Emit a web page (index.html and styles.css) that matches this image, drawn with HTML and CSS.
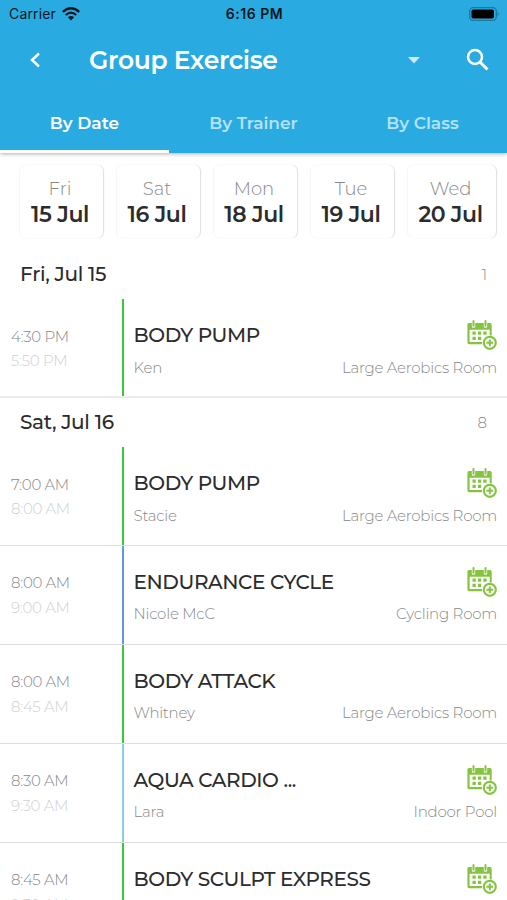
FILE: index.html
```html
<!DOCTYPE html>
<html lang="en">
<head>
<meta charset="utf-8">
<title>Group Exercise</title>
<link rel="stylesheet" href="styles.css">
</head>
<body>
<svg class="defs" width="0" height="0" aria-hidden="true">
  <symbol id="cal" viewBox="0 0 30 30">
    <path d="M2 3h2.800v3.200q0 1.500 1.700 1.500T8.200 6.200V3h8.600v3.200q0 1.500 1.700 1.500T20.200 6.200V3H23q1.700 0 1.700 1.700V15.500h-2V9.800H2.600V22H15V24.200H2Q.4 24.200.4 22.600V4.700Q.4 3 2 3Z" fill="currentColor"/>
    <path d="M6.500 1v4.800M18.500 1v4.800" stroke="currentColor" stroke-width="2" stroke-linecap="round"/>
    <path d="M5.500 11.500h3.300v3.200H5.500zM10.900 11.500h3.300v3.200h-3.300zM16.300 11.500h3.300v3.200h-3.300zM5.500 16.800h3.300V20H5.500zM10.900 16.800h3.300V20h-3.300z" fill="currentColor"/>
    <circle cx="22.800" cy="22.800" r="6" fill="#fff" stroke="currentColor" stroke-width="2.200"/>
    <path d="M22.800 19.400v6.800M19.400 22.800h6.800" stroke="currentColor" stroke-width="2"/>
  </symbol>
</svg>
<header class="header">
  <div class="status">
    <div class="carrier">Carrier
      <svg width="18" height="14" viewBox="0 0 18 14" fill="none" stroke="#07161d" stroke-width="2.300"><path d="M.8 4.900Q9-2.500 17.200 4.900M3.800 8Q9 3.300 14.200 8"/><path d="M9 13.400 5.900 10.300Q9 7.700 12.100 10.300Z" fill="#07161d" stroke="none"/></svg>
    </div>
    <div class="clock">6:16 PM</div>
    <svg class="battery" width="31" height="14" viewBox="0 0 31 14"><rect x=".7" y=".7" width="26.600" height="12.600" rx="3.500" fill="none" stroke="#1c789f" stroke-width="1.300"/><rect x="2.500" y="2.400" width="22.500" height="9.200" rx="1.800"/><path d="M28.500 4.500q2.200 2.500 0 5z" fill="#1c789f"/></svg>
  </div>
  <div class="toolbar">
    <svg class="back" width="12" height="16" viewBox="0 0 12 16"><path d="M10 1.500 3 8 10 14.500" fill="none" stroke="#fff" stroke-width="2.500"/></svg>
    <h1 class="heading">Group Exercise</h1>
    <svg class="caret" width="12" height="7" viewBox="0 0 12 7"><path d="M0 0h12L6 6.500z" fill="#c9edfb"/></svg>
    <svg class="search" width="24" height="24" viewBox="0 0 24 24" fill="none" stroke="#fff"><circle cx="9" cy="9" r="7" stroke-width="2.500"/><path d="m14 14 7.500 7.500" stroke-width="3"/></svg>
  </div>
  <nav class="tabs">
    <div class="tab active"><span>By Date</span></div>
    <div class="tab"><span>By Trainer</span></div>
    <div class="tab"><span>By Class</span></div>
  </nav>
</header>
<div class="dates">
  <div class="date"><span class="dow">Fri</span><span class="day">15 Jul</span></div>
  <div class="date"><span class="dow">Sat</span><span class="day">16 Jul</span></div>
  <div class="date"><span class="dow">Mon</span><span class="day">18 Jul</span></div>
  <div class="date"><span class="dow">Tue</span><span class="day">19 Jul</span></div>
  <div class="date"><span class="dow">Wed</span><span class="day">20 Jul</span></div>
</div>
<main>
  <div class="group"><h2>Fri, Jul 15</h2><span class="count">1</span></div>
  <article class="row last">
    <div class="times"><span>4:30 PM</span><span class="end">5:50 PM</span></div>
    <div class="info green"><div class="top"><h3>BODY PUMP</h3><svg class="cal"><use href="#cal"/></svg></div><div class="sub"><span>Ken</span><span>Large Aerobics Room</span></div></div>
  </article>
  <div class="group next"><h2>Sat, Jul 16</h2><span class="count">8</span></div>
  <article class="row">
    <div class="times"><span>7:00 AM</span><span class="end">8:00 AM</span></div>
    <div class="info green"><div class="top"><h3>BODY PUMP</h3><svg class="cal"><use href="#cal"/></svg></div><div class="sub"><span>Stacie</span><span>Large Aerobics Room</span></div></div>
  </article>
  <article class="row">
    <div class="times"><span>8:00 AM</span><span class="end">9:00 AM</span></div>
    <div class="info blue"><div class="top"><h3>ENDURANCE CYCLE</h3><svg class="cal"><use href="#cal"/></svg></div><div class="sub"><span>Nicole McC</span><span>Cycling Room</span></div></div>
  </article>
  <article class="row">
    <div class="times"><span>8:00 AM</span><span class="end">8:45 AM</span></div>
    <div class="info green"><div class="top"><h3>BODY ATTACK</h3></div><div class="sub"><span>Whitney</span><span>Large Aerobics Room</span></div></div>
  </article>
  <article class="row">
    <div class="times"><span>8:30 AM</span><span class="end">9:30 AM</span></div>
    <div class="info sky"><div class="top"><h3>AQUA CARDIO ...</h3><svg class="cal"><use href="#cal"/></svg></div><div class="sub"><span>Lara</span><span>Indoor Pool</span></div></div>
  </article>
  <article class="row">
    <div class="times"><span>8:45 AM</span><span class="end">9:30 AM</span></div>
    <div class="info green"><div class="top"><h3>BODY SCULPT EXPRESS</h3><svg class="cal"><use href="#cal"/></svg></div></div>
  </article>
</main>
</body>
</html>
```
FILE: styles.css
```css
* { box-sizing: border-box; }
html, body { height: 100%; }
body { margin: 0; overflow: hidden; background: #fff; font-family: Montserrat, Inter, sans-serif; color: #2c2c2c; white-space: nowrap; }
h1, h2, h3 { margin: 0; }
svg { display: block; flex: none; }
.defs { position: absolute; }

.header { height: 153px; background: #29abe2; box-shadow: 0 1px 4px rgba(0, 0, 0, .3); display: flex; flex-direction: column; }
.status { height: 27px; display: grid; grid-template-columns: 1fr auto 1fr; align-items: center; padding: 0 7px 0 9px; color: #07161d; font-family: Inter, sans-serif; }
.carrier { display: flex; align-items: center; gap: 6px; font-size: 14px; line-height: 20px; letter-spacing: .15px; }
.clock { font-size: 14px; font-weight: 600; letter-spacing: .5px; }
.battery { justify-self: end; }
.toolbar { height: 66px; display: flex; align-items: center; padding: 0 17px 0 29px; }
.back { margin-right: 48px; }
.heading { flex: 1; color: #fff; font-size: 25px; line-height: 30px; font-weight: 600; letter-spacing: -.32px; }
.caret { margin-right: 46px; }
.tabs { flex: 1; display: grid; grid-template-columns: repeat(3, 1fr); }
.tab { display: flex; justify-content: center; padding-top: 18px; font-size: 17px; line-height: 24px; font-weight: 600; color: #b5e2f6; border-bottom: 3px solid transparent; }
.active { color: #fff; border-bottom-color: #fff; }

.dates { height: 96px; padding: 12px 10px 11px 20px; display: grid; grid-template-columns: repeat(4, 83px) 88px; column-gap: 14px; }
.date { display: flex; flex-direction: column; align-items: center; padding: 12px 3px 0 0; border-radius: 6px; box-shadow: 1px 0 1px rgba(0, 0, 0, .13), -1px 0 1px rgba(0, 0, 0, .04); }
.dow { font-size: 18px; line-height: 24px; font-weight: 300; color: #888; }
.day { font-size: 22px; line-height: 28px; font-weight: 600; letter-spacing: -.4px; }

.group { height: 50px; padding: 0 20px; display: flex; align-items: center; justify-content: space-between; }
.next { height: 49px; padding-bottom: 1px; }
h2 { font-size: 20px; line-height: 26px; font-weight: 500; letter-spacing: -.32px; }
.count { font-size: 15px; font-weight: 300; color: #888; }

.row { height: 98.900px; display: flex; border-bottom: 1.500px solid #dedede; }
.last { height: 99px; border-bottom: 2px solid #ececec; }
.times { width: 121.500px; padding: 25.500px 0 0 11px; display: flex; flex-direction: column; font-size: 15px; line-height: 24.500px; font-weight: 300; letter-spacing: -.3px; color: #888; }
.end { color: #d0d0d0; }
.info { flex: 1; border-left: 2px solid; padding: 20px 10px 0 10px; }
.green { border-left-color: #3c3; }
.blue { border-left-color: #6495ed; }
.sky { border-left-color: #87ceeb; }
.top { height: 32px; display: flex; align-items: center; justify-content: space-between; }
h3 { color: #2c2c2c; font-size: 20px; line-height: 30px; font-weight: 500; letter-spacing: -.4px; }
.cal { width: 30px; height: 30px; color: #85c441; }
.sub { display: flex; justify-content: space-between; margin-top: 5.500px; font-size: 15px; line-height: 22px; font-weight: 300; letter-spacing: -.23px; color: #888; }
```
